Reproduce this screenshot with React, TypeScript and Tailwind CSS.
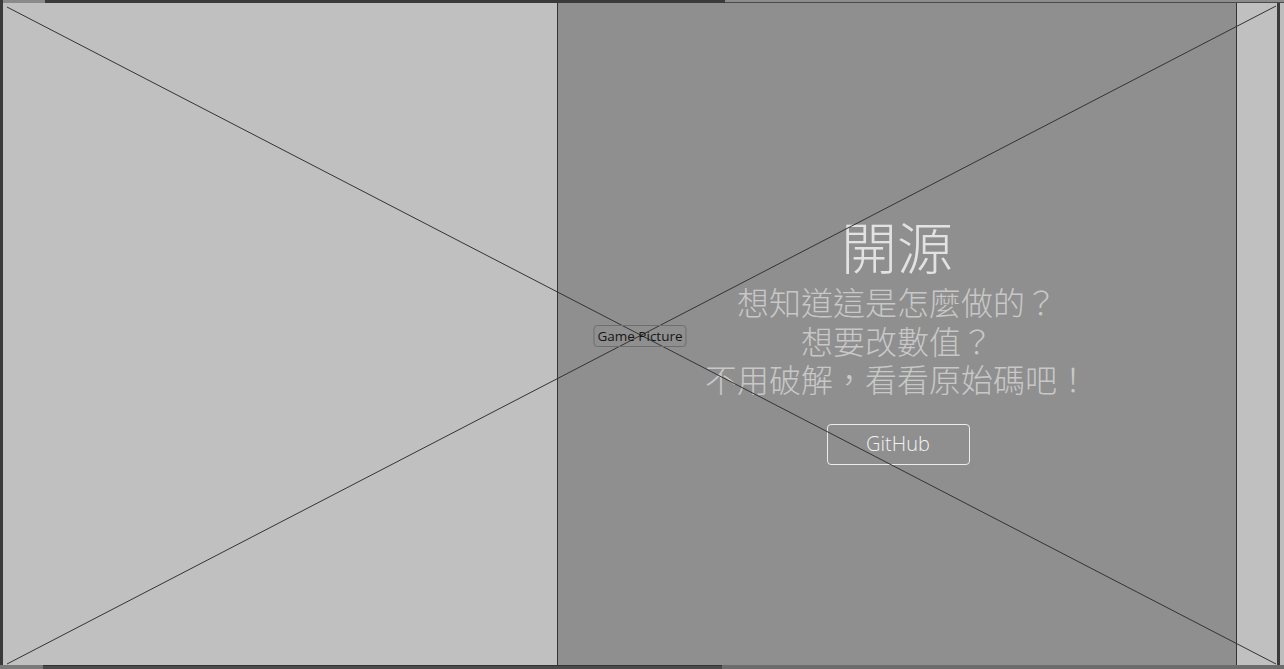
import React from 'react';

const cjk = {
    fontFamily: '"Noto Sans CJK TC", "Noto Sans CJK JP", "Noto Sans", sans-serif',
    fontFeatureSettings: '"locl"',
};

const lines = ['想知道這是怎麼做的？', '想要改數值？', '不用破解，看看原始碼吧！'];

const PlaceholderCross: React.FC = () => (
    <svg
        className="absolute inset-0 w-full h-full pointer-events-none"
        viewBox="0 0 1274 662"
        preserveAspectRatio="none"
    >
        <line x1="4" y1="4" x2="1273" y2="661" stroke="#333" strokeWidth="1" />
        <line x1="4" y1="661" x2="1273" y2="3" stroke="#333" strokeWidth="1" />
    </svg>
);

const OpenSourcePanel: React.FC = () => (
    <div lang="zh-Hant" className="w-[678px] bg-[#8f8f8f] flex flex-col items-center justify-center pt-[12px]" style={cjk}>
        <h1 className="text-[56px] leading-[59px] mb-[8px] font-light text-[#e2e2e2]">開源</h1>
        <div className="flex flex-col items-center text-[32px] leading-[38.5px] font-light text-[#c8c8c8]">
            {lines.map(l => <p key={l}>{l}</p>)}
        </div>
        <button
            className="mt-[26px] ml-[2px] w-[143px] h-[41px] rounded-[4px] border border-[#ececec] text-[20px] font-light text-[#f2f2f2]"
            style={{ fontFamily: '"Open Sans", sans-serif' }}
        >
            GitHub
        </button>
    </div>
);

export default function App() {
    return (
        <div className="w-[1284px] h-[669px] flex flex-col bg-[#c0c0c0] overflow-hidden">
            <div className="flex h-[3px]">
                <div className="w-[3px] bg-[#3a3a3a]" />
                <div className="w-[42px] bg-[#8a8a8a]" />
                <div className="w-[680px] bg-[#3a3a3a]" />
                <div className="flex-1 bg-[#8c8c8c] border-b border-[#4a4a4a]" />
            </div>
            <div className="flex flex-1 min-h-0">
                <div className="w-[3px] bg-[#3a3a3a]" />
                <div className="relative flex w-[1274px]">
                    <div className="w-[555px] bg-[#c0c0c0] border-r border-[#333]" />
                    <OpenSourcePanel />
                    <div className="flex-1 bg-[#c0c0c0] border-l border-[#333]" />
                    <PlaceholderCross />
                    <div
                        className="absolute left-1/2 top-1/2 -translate-x-1/2 -translate-y-1/2 mt-[2px] h-[22px] px-[3px] flex items-center rounded-[4px] border border-[#6e6e6e] text-[13.5px] text-[#161616]"
                        style={{ fontFamily: '"Open Sans", sans-serif' }}
                    >
                        Game Picture
                    </div>
                </div>
                <div className="w-[3px] bg-[#3a3a3a]" />
                <div className="flex-1 bg-[#bdbdbd]" />
            </div>
            <div className="flex h-[4px]">
                <div className="w-[43px] bg-[#7a7a7a]" />
                <div className="w-[679px] bg-[#4a4a4a] border-t border-[#333]" />
                <div className="flex-1 bg-[#6c6c6c]" />
            </div>
        </div>
    );
}
